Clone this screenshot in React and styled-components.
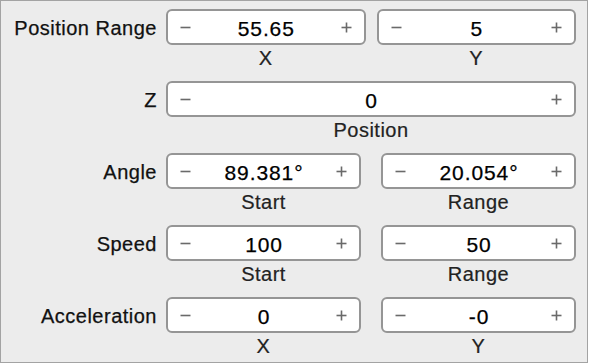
import React from "react";
import styled, { createGlobalStyle } from "styled-components";

const Global = createGlobalStyle`
  html, body { margin: 0; padding: 0; background: #ffffff; }
  body { font-family: "Liberation Sans", Arial, sans-serif; }
`;

const Panel = styled.div`
  box-sizing: border-box;
  width: 588px;
  height: 363px;
  overflow: hidden;
  background: #ececec;
  border: 1px solid #a3a3a3;
  padding: 8px 11px 0 0;
  display: flex;
  flex-direction: column;
`;

const Row = styled.div`
  display: grid;
  grid-template-columns: 156px 1fr;
  column-gap: 9px;
  height: 72px;
  flex: none;
`;

const Label = styled.div`
  height: 36px;
  padding-top: 3px;
  box-sizing: border-box;
  display: flex;
  align-items: center;
  justify-content: flex-end;
  font-size: 20px;
  letter-spacing: 0.5px;
  color: #111111;
  -webkit-text-stroke: 0.25px #111111;
  white-space: nowrap;
`;

const Fields = styled.div`
  display: grid;
  grid-template-columns: ${(p) => (p.$count === 1 ? "1fr" : "1fr 1fr")};
  column-gap: ${(p) => p.$gap}px;
`;

const Field = styled.div`
  display: flex;
  flex-direction: column;
`;

const Stepper = styled.div`
  box-sizing: border-box;
  height: 36px;
  background: #ffffff;
  border: 2px solid #959595;
  border-radius: 6px;
  display: grid;
  grid-template-columns: 12px 1fr 12px;
  align-items: center;
  padding: 0 11px 0 12px;
`;

const Value = styled.div`
  text-align: center;
  font-size: 21px;
  letter-spacing: 0.9px;
  color: #000000;
  -webkit-text-stroke: 0.25px #000000;
  padding-top: 3px;
`;

const Caption = styled.div`
  text-align: center;
  font-size: 20px;
  letter-spacing: 0.5px;
  line-height: 22px;
  margin-top: 2px;
  color: #222222;
  -webkit-text-stroke: 0.2px #222222;
`;

const Sign = styled.svg`
  width: 11px;
  height: 11px;
  display: block;
  margin-top: 1px;
`;

const Minus = () => (
  <Sign viewBox="0 0 11 11">
    <line x1="0.5" y1="5.5" x2="10.5" y2="5.5" stroke="#6a6a6a" strokeWidth="1.6" />
  </Sign>
);

const Plus = () => (
  <Sign viewBox="0 0 11 11">
    <line x1="0.5" y1="5.5" x2="10.5" y2="5.5" stroke="#6a6a6a" strokeWidth="1.6" />
    <line x1="5.5" y1="0.5" x2="5.5" y2="10.5" stroke="#6a6a6a" strokeWidth="1.6" />
  </Sign>
);

const StepField = ({ value, caption }) => (
  <Field>
    <Stepper>
      <Minus />
      <Value>{value}</Value>
      <Plus />
    </Stepper>
    <Caption>{caption}</Caption>
  </Field>
);

const rows = [
  { label: "Position Range", gap: 11, fields: [["55.65", "X"], ["5", "Y"]] },
  { label: "Z", gap: 0, fields: [["0", "Position"]] },
  { label: "Angle", gap: 20, fields: [["89.381°", "Start"], ["20.054°", "Range"]] },
  { label: "Speed", gap: 20, fields: [["100", "Start"], ["50", "Range"]] },
  { label: "Acceleration", gap: 20, fields: [["0", "X"], ["-0", "Y"]] },
];

export default function App() {
  return (
    <>
      <Global />
      <Panel>
        {rows.map((r) => (
          <Row key={r.label}>
            <Label>{r.label}</Label>
            <Fields $count={r.fields.length} $gap={r.gap}>
              {r.fields.map(([v, c]) => (
                <StepField key={c} value={v} caption={c} />
              ))}
            </Fields>
          </Row>
        ))}
      </Panel>
    </>
  );
}
